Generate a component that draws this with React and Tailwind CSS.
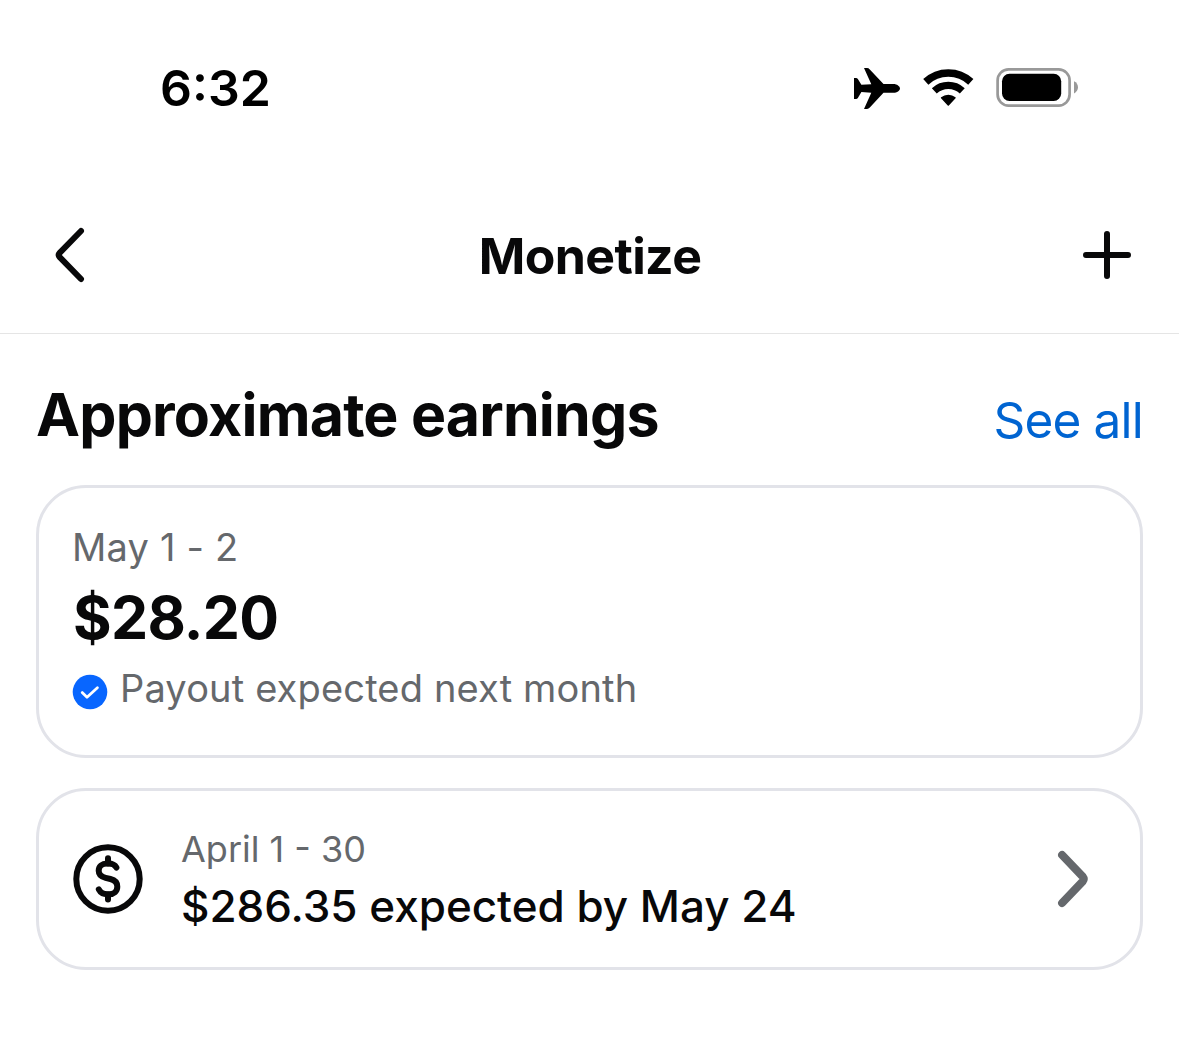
import React from 'react';

const AirplaneIcon = () => (
  <svg width="47" height="41" viewBox="0 0 47 41" fill="#000">
    <path d="M10 0H13Q14.6 0 15.8 1.4L29.5 16H39.5C43 16 46 18.4 46 20.4S43 24.8 39.5 24.8H29.5L15.8 39.6Q14.6 41 13 41H10L17.3 24.8L7.4 24L4 29.8Q3.2 31 2 31H0V10H2Q3.2 10 4 11.2L7.4 16.8L17.3 16.2Z" />
  </svg>
);

const WifiIcon = () => (
  <svg width="51" height="38" viewBox="0 0 51 38" fill="none" stroke="#000">
    <path d="M2.8 12.9A33 33 0 0 1 47.8 12.9" strokeWidth="7.6" />
    <path d="M11.3 21.9A20.6 20.6 0 0 1 39.3 21.9" strokeWidth="7.2" />
    <path
      d="M18.6 28.8A10.6 10.6 0 0 1 32 28.8L25.3 36Z"
      fill="#000"
      strokeWidth="1.5"
      strokeLinejoin="round"
    />
  </svg>
);

const BatteryIcon = () => (
  <svg width="82" height="39" viewBox="0 0 82 39">
    <rect x="1.6" y="1.4" width="72" height="36.2" rx="11" fill="none" stroke="#999" strokeWidth="2.7" />
    <rect x="6" y="5.8" width="59.2" height="27.2" rx="7.5" fill="#000" />
    <path d="M78 13.2C80.6 14.4 82 16.8 82 19.3S80.6 24.2 78 25.4Z" fill="#999" />
  </svg>
);

const BackIcon = () => (
  <svg width="30" height="56" viewBox="0 0 30 56" fill="none" stroke="#080809" strokeWidth="6" strokeLinecap="round">
    <path d="M26 4L4.7 25.8Q2.7 28 4.7 30.2L26 52" />
  </svg>
);

const PlusIcon = () => (
  <svg width="48" height="48" viewBox="0 0 48 48" stroke="#080809" strokeWidth="6" strokeLinecap="round">
    <path d="M24 3V45M3 24H45" />
  </svg>
);

const CheckBadge = () => (
  <svg width="36" height="36" viewBox="0 0 36 36" fill="none">
    <circle cx="18" cy="18" r="17.3" fill="#0866ff" />
    <path d="M10.2 18.6L15 23.2L25.4 13.8" stroke="#fff" strokeWidth="2.8" strokeLinecap="round" strokeLinejoin="round" />
  </svg>
);

const DollarIcon = () => (
  <svg width="70" height="70" viewBox="0 0 70 70" fill="none" stroke="#080809" strokeWidth="6" strokeLinecap="round">
    <circle cx="35" cy="35" r="31.7" />
    <path d="M35 14.3V19.4M35 50.4V55.6" />
    <path d="M43.4 23.6C41.8 20.8 39 19.6 35.4 19.6H34C29 19.6 25.7 22.6 25.7 26.7C25.7 30.8 28.5 32.8 32.6 33.8L37.4 35C41.5 36 44.3 38.6 44.3 42.7C44.3 47.2 40.8 50.2 36 50.2H34.4C30.6 50.2 27.4 48.4 25.8 45.3" />
  </svg>
);

const ForwardIcon = () => (
  <svg width="32" height="58" viewBox="0 0 32 58" fill="none" stroke="#65686c" strokeWidth="8" strokeLinecap="round">
    <path d="M5.1 5L25.8 26.7Q27.6 29 25.8 31.3L5.1 53" />
  </svg>
);

const StatusBar = () => (
  <div className="flex h-44 items-center justify-between pr-[101px] pl-40">
    <span className="text-[50px] leading-[50px] font-semibold text-black">6:32</span>
    <div className="flex items-center gap-[22px]">
      <AirplaneIcon />
      <WifiIcon />
      <div className="pb-0.5">
        <BatteryIcon />
      </div>
    </div>
  </div>
);

const Header = () => (
  <header className="flex h-[158px] items-center justify-between border-b border-[#e5e5e5] pr-12 pl-[55px]">
    <button className="flex w-[42px]">
      <BackIcon />
    </button>
    <h1 className="pt-0.5 text-[50px] leading-[50px] font-bold tracking-[-0.6px]">Monetize</h1>
    <button>
      <PlusIcon />
    </button>
  </header>
);

const App = () => {
  return (
    <div className="min-h-[1055px] w-[1179px] bg-white font-['Inter',sans-serif] text-[#080809]">
      <StatusBar />
      <Header />
      <main className="px-9">
        <div className="flex h-[151px] items-start justify-between pt-[51px]">
          <h2 className="text-[59px] leading-[60px] font-bold tracking-[-0.8px] whitespace-nowrap">
            Approximate earnings
          </h2>
          <a className="pt-[5px] text-[49.5px] leading-[60px] tracking-[-0.8px] text-[#0064d1]">See all</a>
        </div>

        <section className="h-[273px] w-[1107px] rounded-[50px] border-3 border-[#e2e3e9] px-[33px] pt-[34px]">
          <p className="text-[38px] leading-[50px] tracking-[0.2px] text-[#65686c]">May 1 - 2</p>
          <p className="mt-4 pl-px text-[59px] leading-[60px] font-bold tracking-[-0.7px]">$28.20</p>
          <div className="mt-[15px] flex items-start gap-3">
            <div className="pt-[11px]">
              <CheckBadge />
            </div>
            <p className="text-[38px] leading-[50px] tracking-[0.16px] text-[#65686c]">Payout expected next month</p>
          </div>
        </section>

        <section className="mt-[30px] flex h-[182px] w-[1107px] items-center rounded-[50px] border-3 border-[#e2e3e9] pr-[51px] pl-[34px]">
          <DollarIcon />
          <div className="ml-[38px] flex-1">
            <p className="text-[36px] leading-[50px] text-[#65686c]">April 1 - 30</p>
            <p className="mt-[4px] text-[44px] leading-[56px] font-medium">$286.35 expected by May 24</p>
          </div>
          <ForwardIcon />
        </section>
      </main>
    </div>
  );
};

export default App;
